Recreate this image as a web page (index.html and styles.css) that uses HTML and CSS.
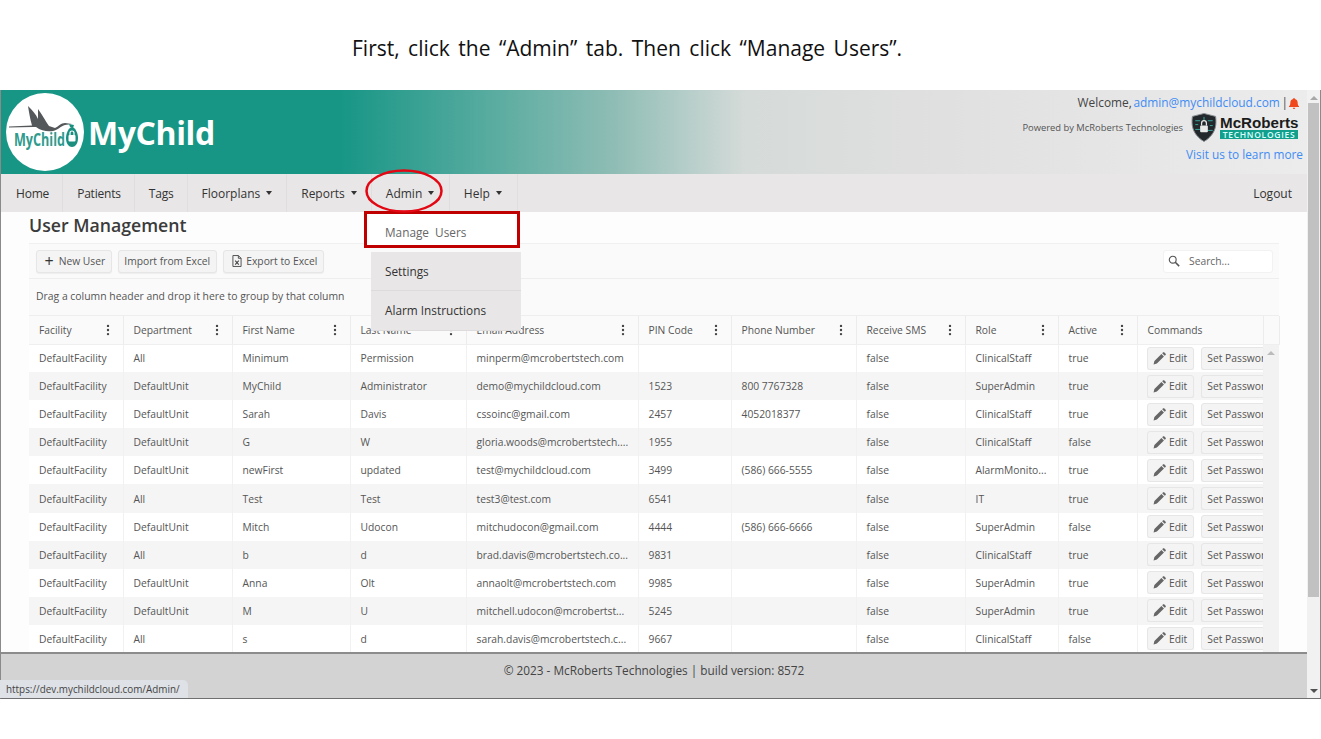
FILE: index.html
```html
<!DOCTYPE html>
<html lang="en">
<head>
<meta charset="utf-8">
<title>User Management</title>
<link rel="stylesheet" href="styles.css">
</head>
<body>
<svg class="defs" width="0" height="0" aria-hidden="true">
  <symbol id="kebab" viewBox="0 0 4 14"><circle cx="2" cy="2.2" r="1.4"/><circle cx="2" cy="7" r="1.4"/><circle cx="2" cy="11.8" r="1.4"/></symbol>
  <symbol id="pencil" viewBox="0 0 14 14"><path d="M0.6 13.4l0.9-3.6 7.6-7.6 2.7 2.7-7.6 7.6zM9.9 1.4l1-1a0.8 0.8 0 0 1 1.1 0l1.6 1.6a0.8 0.8 0 0 1 0 1.1l-1 1z"/></symbol>
</svg>
<p class="caption">First, click the “Admin” tab. Then click “Manage Users”.</p>
<div class="window">
  <div class="viewport">
    <header class="masthead">
      <div class="brand">
        <svg class="brand-logo" viewBox="0 0 84 84" width="84" height="84" role="img" aria-label="MyChild logo">
          <circle cx="42" cy="42" r="39" fill="#fff"/>
          <path d="M25 16C29 20 33 24 35 29L35 19C38 23 42 30 46 36L52 38C56 36 58 33 62 33L69 34L62 35C58 36 55 40 50 41C45 42 38 41 33 37L30 37L6 37.500L6 36.500L29 35.500C27 29 26 22 25 16Z" fill="#55585a"/>
          <path d="M66 34l5 1-1 3-3-1z" fill="#1a8f80"/>
          <path d="M69 37c4 1 6 7 6 11 0 6-3 9-6 9s-6-3-6-9c0-4 2-10 6-11z" fill="#1a8f80"/>
          <rect x="65.500" y="45" width="7" height="6.500" rx="1" fill="#fff"/>
          <path d="M67 45v-2a2 2 0 0 1 4 0v2" fill="none" stroke="#fff" stroke-width="1.200"/>
          <text class="logo-text" x="11" y="56" textLength="51" lengthAdjust="spacingAndGlyphs">MyChild</text>
        </svg>
        <span class="brand-name">MyChild</span>
      </div>
      <div class="account">
        <div class="welcome">Welcome, <a href="#">admin@mychildcloud.com</a> |<svg class="bell" viewBox="0 0 12 13" width="10" height="11" aria-hidden="true"><path d="M6 0a1 1 0 0 1 1 1.100c2.200.4 3.400 2.200 3.400 4.400 0 2.400.6 3.400 1.600 4.400v.9H0v-.9c1-1 1.600-2 1.600-4.400C1.600 3.300 2.800 1.500 5 1.100A1 1 0 0 1 6 0zM4.500 11.500h3a1.500 1.500 0 0 1-3 0z"/></svg></div>
        <div class="powered">
          <span>Powered by McRoberts Technologies</span>
          <svg class="shield" viewBox="0 0 28 30" width="28" height="29" aria-hidden="true">
            <path d="M14 .5l12 3c1 8 1 18-12 26C1 21.500 1 11.500 2 3.500z" fill="#23282c" stroke="#8b8f92" stroke-width="1"/>
            <path d="M5 8h5M5 12h3M5 17h5M23 8h-5M23 13h-3M23 18h-5M14 4v4" stroke="#3aa9a0" stroke-width="1" fill="none"/>
            <rect x="10" y="13" width="8" height="7" rx="1" fill="#e8e8e8"/>
            <path d="M11.500 13v-2.500a2.500 2.500 0 0 1 5 0V13" fill="none" stroke="#e8e8e8" stroke-width="1.300"/>
          </svg>
          <div class="mcr">
            <span class="mcr-name">McRoberts</span>
            <span class="mcr-tech">TECHNOLOGIES</span>
          </div>
        </div>
        <a class="visit" href="#">Visit us to learn more</a>
      </div>
    </header>
    <nav class="nav">
      <a class="nav-item nav-plain" href="#">Home</a>
      <a class="nav-item nav-plain" href="#">Patients</a>
      <a class="nav-item nav-plain" href="#">Tags</a>
      <a class="nav-item" href="#">Floorplans<i class="caret"></i></a>
      <a class="nav-item" href="#">Reports<i class="caret"></i></a>
      <a class="nav-item nav-admin" href="#">Admin<i class="caret"></i></a>
      <a class="nav-item nav-help" href="#">Help<i class="caret"></i></a>
      <a class="nav-logout" href="#">Logout</a>
    </nav>
    <main class="content">
      <h1 class="title">User Management</h1>
      <section class="grid">
        <div class="toolbar">
          <button class="btn" type="button"><span class="plus">+</span>New User</button>
          <button class="btn" type="button">Import from Excel</button>
          <button class="btn" type="button"><svg class="xls" viewBox="0 0 11 13" width="10" height="12" aria-hidden="true"><path d="M1 .5h6l3 3v9H1zM7 .5v3h3" fill="none" stroke="#444" stroke-width="1"/><path d="M3.500 6l4 4.500M7.500 6l-4 4.500" stroke="#444" stroke-width="1.200"/></svg>Export to Excel</button>
          <label class="search"><svg viewBox="0 0 14 14" width="12" height="12" aria-hidden="true"><circle cx="5.500" cy="5.500" r="4" fill="none" stroke="#555" stroke-width="1.300"/><path d="M8.500 8.500l4.500 4.500" stroke="#555" stroke-width="1.800"/></svg><span>Search...</span></label>
        </div>
        <div class="group-hint">Drag a column header and drop it here to group by that column</div>
        <table class="users">
          <colgroup>
            <col class="c1"><col class="c2"><col class="c3"><col class="c4"><col class="c5"><col class="c6"><col class="c7"><col class="c8"><col class="c9"><col class="c10"><col class="c11"><col class="c12">
          </colgroup>
          <thead>
            <tr>
              <th><span>Facility</span><svg class="kebab"><use href="#kebab"/></svg></th>
              <th><span>Department</span><svg class="kebab"><use href="#kebab"/></svg></th>
              <th><span>First Name</span><svg class="kebab"><use href="#kebab"/></svg></th>
              <th><span>Last Name</span><svg class="kebab"><use href="#kebab"/></svg></th>
              <th><span>Email Address</span><svg class="kebab"><use href="#kebab"/></svg></th>
              <th><span>PIN Code</span><svg class="kebab"><use href="#kebab"/></svg></th>
              <th><span>Phone Number</span><svg class="kebab"><use href="#kebab"/></svg></th>
              <th><span>Receive SMS</span><svg class="kebab"><use href="#kebab"/></svg></th>
              <th><span>Role</span><svg class="kebab"><use href="#kebab"/></svg></th>
              <th><span>Active</span><svg class="kebab"><use href="#kebab"/></svg></th>
              <th><span>Commands</span></th>
              <th></th>
            </tr>
          </thead>
          <tbody>
            <tr><td>DefaultFacility</td><td>All</td><td>Minimum</td><td>Permission</td><td>minperm@mcrobertstech.com</td><td></td><td></td><td>false</td><td>ClinicalStaff</td><td>true</td><td class="cmds"><div class="cmd-row"><button class="btn" type="button"><svg class="pen"><use href="#pencil"/></svg>Edit</button><button class="btn" type="button">Set Password</button></div></td><td class="gutter" rowspan="11"><i class="gutter-up"></i></td></tr>
            <tr><td>DefaultFacility</td><td>DefaultUnit</td><td>MyChild</td><td>Administrator</td><td>demo@mychildcloud.com</td><td>1523</td><td>800 7767328</td><td>false</td><td>SuperAdmin</td><td>true</td><td class="cmds"><div class="cmd-row"><button class="btn" type="button"><svg class="pen"><use href="#pencil"/></svg>Edit</button><button class="btn" type="button">Set Password</button></div></td></tr>
            <tr><td>DefaultFacility</td><td>DefaultUnit</td><td>Sarah</td><td>Davis</td><td>cssoinc@gmail.com</td><td>2457</td><td>4052018377</td><td>false</td><td>ClinicalStaff</td><td>true</td><td class="cmds"><div class="cmd-row"><button class="btn" type="button"><svg class="pen"><use href="#pencil"/></svg>Edit</button><button class="btn" type="button">Set Password</button></div></td></tr>
            <tr><td>DefaultFacility</td><td>DefaultUnit</td><td>G</td><td>W</td><td>gloria.woods@mcrobertstech....</td><td>1955</td><td></td><td>false</td><td>ClinicalStaff</td><td>false</td><td class="cmds"><div class="cmd-row"><button class="btn" type="button"><svg class="pen"><use href="#pencil"/></svg>Edit</button><button class="btn" type="button">Set Password</button></div></td></tr>
            <tr><td>DefaultFacility</td><td>DefaultUnit</td><td>newFirst</td><td>updated</td><td>test@mychildcloud.com</td><td>3499</td><td>(586) 666-5555</td><td>false</td><td>AlarmMonito...</td><td>true</td><td class="cmds"><div class="cmd-row"><button class="btn" type="button"><svg class="pen"><use href="#pencil"/></svg>Edit</button><button class="btn" type="button">Set Password</button></div></td></tr>
            <tr><td>DefaultFacility</td><td>All</td><td>Test</td><td>Test</td><td>test3@test.com</td><td>6541</td><td></td><td>false</td><td>IT</td><td>true</td><td class="cmds"><div class="cmd-row"><button class="btn" type="button"><svg class="pen"><use href="#pencil"/></svg>Edit</button><button class="btn" type="button">Set Password</button></div></td></tr>
            <tr><td>DefaultFacility</td><td>DefaultUnit</td><td>Mitch</td><td>Udocon</td><td>mitchudocon@gmail.com</td><td>4444</td><td>(586) 666-6666</td><td>false</td><td>SuperAdmin</td><td>false</td><td class="cmds"><div class="cmd-row"><button class="btn" type="button"><svg class="pen"><use href="#pencil"/></svg>Edit</button><button class="btn" type="button">Set Password</button></div></td></tr>
            <tr><td>DefaultFacility</td><td>All</td><td>b</td><td>d</td><td>brad.davis@mcrobertstech.co...</td><td>9831</td><td></td><td>false</td><td>ClinicalStaff</td><td>true</td><td class="cmds"><div class="cmd-row"><button class="btn" type="button"><svg class="pen"><use href="#pencil"/></svg>Edit</button><button class="btn" type="button">Set Password</button></div></td></tr>
            <tr><td>DefaultFacility</td><td>DefaultUnit</td><td>Anna</td><td>Olt</td><td>annaolt@mcrobertstech.com</td><td>9985</td><td></td><td>false</td><td>SuperAdmin</td><td>true</td><td class="cmds"><div class="cmd-row"><button class="btn" type="button"><svg class="pen"><use href="#pencil"/></svg>Edit</button><button class="btn" type="button">Set Password</button></div></td></tr>
            <tr><td>DefaultFacility</td><td>DefaultUnit</td><td>M</td><td>U</td><td>mitchell.udocon@mcrobertst...</td><td>5245</td><td></td><td>false</td><td>SuperAdmin</td><td>true</td><td class="cmds"><div class="cmd-row"><button class="btn" type="button"><svg class="pen"><use href="#pencil"/></svg>Edit</button><button class="btn" type="button">Set Password</button></div></td></tr>
            <tr><td>DefaultFacility</td><td>All</td><td>s</td><td>d</td><td>sarah.davis@mcrobertstech.c...</td><td>9667</td><td></td><td>false</td><td>ClinicalStaff</td><td>false</td><td class="cmds"><div class="cmd-row"><button class="btn" type="button"><svg class="pen"><use href="#pencil"/></svg>Edit</button><button class="btn" type="button">Set Password</button></div></td></tr>
          </tbody>
        </table>
      </section>
    </main>
    <footer class="footer">© 2023 - McRoberts Technologies | build version: 8572</footer>
  </div>
  <div class="scrollbar">
    <i class="sb-up"></i>
    <div class="sb-thumb"></div>
    <i class="sb-down"></i>
  </div>
  <svg class="mark-ellipse" viewBox="0 0 78 44" width="78" height="44" aria-hidden="true"><ellipse cx="39" cy="22" rx="37.500" ry="20.500" fill="none" stroke="#e30613" stroke-width="2.500"/></svg>
  <div class="mark-box"></div>
  <ul class="menu">
    <li class="menu-active">Manage&nbsp; Users</li>
    <li>Settings</li>
    <li>Alarm Instructions</li>
  </ul>
  <div class="status">https://dev.mychildcloud.com/Admin/</div>
</div>
</body>
</html>
```

FILE: styles.css
```css
* { box-sizing: border-box; }
html, body { margin: 0; padding: 0; height: 100%; overflow: hidden; background: #fff; }
body { font-family: "Open Sans", "Noto Sans", sans-serif; color: #444; }
.defs { position: absolute; }
a { color: #3f8cf5; text-decoration: none; }

.caption { margin: 0; height: 90px; padding: 34px 0 0 352px; font-size: 21px; line-height: 28px; word-spacing: 3px; color: #111; }

.window { position: relative; display: flex; height: 609px; width: 1321px; border-left: 1px solid #8a8a8a; border-right: 1px solid #8a8a8a; border-bottom: 1px solid #6f6f6f; }
.viewport { flex: 1; min-width: 0; display: flex; flex-direction: column; }

.masthead { height: 84px; flex: none; display: flex; justify-content: space-between; background: linear-gradient(90deg, #179686 0, #179686 26%, #8fbdb5 47%, #d5dbd9 57%, #dfdfdf 70%, #ececec 100%); }
.brand { display: flex; align-items: center; padding-left: 2px; }
.brand-logo { flex: none; }
.logo-text { font-family: "Open Sans", sans-serif; font-size: 17px; font-weight: 700; fill: #2f9b8d; }
.brand-name { margin-left: 1px; font-size: 32px; font-weight: 700; color: #fff; letter-spacing: -.4px; }

.account { display: flex; flex-direction: column; align-items: flex-end; padding: 3px 4px 0 0; font-size: 11.900px; color: #444; }
.welcome { line-height: 18px; padding-right: 4px; white-space: nowrap; word-spacing: -1.500px; }
.bell { margin-left: 1px; vertical-align: -2px; fill: #f0471c; }
.powered { display: flex; align-items: center; height: 30px; font-size: 9.400px; color: #555; margin-top: 1px; padding-right: 5px; }
.powered > span { margin-right: 7px; }
.shield { flex: none; margin-right: 2px; }
.mcr { display: flex; flex-direction: column; width: 78px; }
.mcr-name { font-family: "Liberation Sans", sans-serif; font-size: 15.200px; font-weight: 700; line-height: 15px; color: #1b1b1b; white-space: nowrap; }
.mcr-tech { background: #12a08c; color: #dff; font-size: 8.500px; font-weight: 600; line-height: 9px; height: 9px; text-align: center; letter-spacing: .7px; white-space: nowrap; }
.visit { font-size: 11.800px; line-height: 18px; margin-top: 3px; }

.nav { height: 38px; flex: none; display: flex; background: #e8e6e6; font-size: 12px; color: #333; padding-left: 1px; }
.nav-item { display: flex; align-items: center; padding: 0 14px; color: #333; border-right: 1px solid #e0dede; white-space: nowrap; }
.nav-plain { padding-right: 13px; letter-spacing: -.2px; }
.nav-admin { min-width: 78px; }
.nav-help { min-width: 68px; }
.caret { display: inline-block; margin: 0 0 0 6px; border: 3px solid transparent; border-top: 4px solid #333; border-bottom: 0; }
.nav-logout { margin-left: auto; align-self: center; padding-right: 15px; color: #333; }

.content { flex: 1; min-height: 0; overflow: hidden; background: #fdfdfd; padding: 0 28px; }
.title { margin: 0; height: 31px; font-size: 17.700px; line-height: 27px; font-weight: 600; color: #3b3b3b; }
.grid { border: 1px solid #f0f0f0; border-width: 1px 0 0; background: #fafafa; }
.toolbar { display: flex; align-items: center; gap: 6px; height: 35px; padding: 0 6px 0 7px; border: solid #eee; border-width: 0 0 1px; }
.btn { display: inline-flex; align-items: center; height: 23px; padding: 0 5.500px; border: 1px solid #e6e6e6; border-radius: 3px; background: #f4f4f4; font: inherit; font-size: 10.300px; color: #555; white-space: nowrap; box-shadow: 0 1px 1px rgba(0,0,0,.05); }
.plus { margin: 0 5px 0 2px; font-size: 16px; line-height: 1; color: #333; }
.xls { margin: 0 4px 0 3px; }
.search { margin-left: auto; display: flex; align-items: center; gap: 9px; width: 110px; height: 23px; padding-left: 4px; background: #fff; border: 1px solid #f2f2f2; border-radius: 3px; font-size: 10.300px; color: #666; }
.group-hint { height: 37px; padding: 0 7px 3px; display: flex; align-items: center; font-size: 10.400px; color: #555; border-bottom: 1px solid #eee; }

.users { table-layout: fixed; border-collapse: collapse; width: 1250px; font-size: 10.300px; color: #555; }
.c1 { width: 94px; } .c2 { width: 109px; } .c3 { width: 118px; } .c4 { width: 116px; } .c5 { width: 172px; } .c6 { width: 93px; } .c7 { width: 125px; } .c8 { width: 109px; } .c9 { width: 93px; } .c10 { width: 79px; } .c11 { width: 126px; } .c12 { width: 16px; }
.users th { height: 28px; padding: 0 10px; font-weight: 400; text-align: left; background: #fafafa; border-right: 1px solid #ececec; border-bottom: 1px solid #efefef; white-space: nowrap; position: relative; }
.users td { height: 28.100px; padding: 0 10px; background: #fff; border-right: 1px solid #f1f1f1; white-space: nowrap; overflow: hidden; }
.users tr:nth-child(even) td { background: #f5f5f5; }
.users tbody tr:first-child td.gutter, .users td.gutter { background: #f2f2f2; padding: 0; border: 0; vertical-align: top; text-align: center; }
.gutter-up { display: block; margin: 6px auto 0; width: 0; border: 4px solid transparent; border-bottom: 4px solid #bbb; border-top: 0; }
.kebab { position: absolute; right: 13px; top: 8px; width: 4px; height: 12px; fill: #444; }
.users td.cmds { padding: 0 0 0 9px; }
.cmd-row { display: flex; gap: 7px; overflow: hidden; }
.cmd-row .btn { flex: none; }
.pen { width: 13px; height: 13px; margin-right: 3px; fill: #666; }

.footer { height: 46px; flex: none; background: #d3d3d3; border-top: 2px solid #8c8c8c; padding-top: 7px; text-align: center; font-size: 11.800px; line-height: 18px; color: #444; }

.scrollbar { flex: none; width: 13px; background: #f1f1f1; position: relative; display: flex; flex-direction: column; align-items: center; }
.sb-up { margin-top: 6px; width: 0; border: 4px solid transparent; border-bottom: 4px solid #a8a8a8; border-top: 0; }
.sb-thumb { margin-top: 3px; width: 11px; height: 494px; background: #c1c1c1; }
.sb-down { margin-top: auto; margin-bottom: 5px; width: 0; border: 4px solid transparent; border-top: 4px solid #505050; border-bottom: 0; }

.mark-ellipse { position: absolute; left: 364px; top: 79px; z-index: 4; }
.mark-box { position: absolute; left: 363px; top: 121px; width: 156px; height: 37px; background: #fff; border: 3px solid #c00000; z-index: 2; }
.menu { position: absolute; left: 370px; top: 122px; width: 150px; margin: 0; padding: 0; list-style: none; font-size: 11.800px; color: #333; z-index: 3; }
.menu li { height: 39.500px; padding-left: 14px; display: flex; align-items: center; background: #e8e6e6; border-bottom: 1px solid #dddbdb; }
.menu li.menu-active { background: transparent; border: 0; color: #666; padding-top: 1px; }
.status { position: absolute; left: -1px; bottom: 0; width: 188px; height: 18px; padding-left: 6px; background: #dee1e6; border-top-right-radius: 5px; font-size: 9.900px; line-height: 18px; color: #444; z-index: 5; }
```
